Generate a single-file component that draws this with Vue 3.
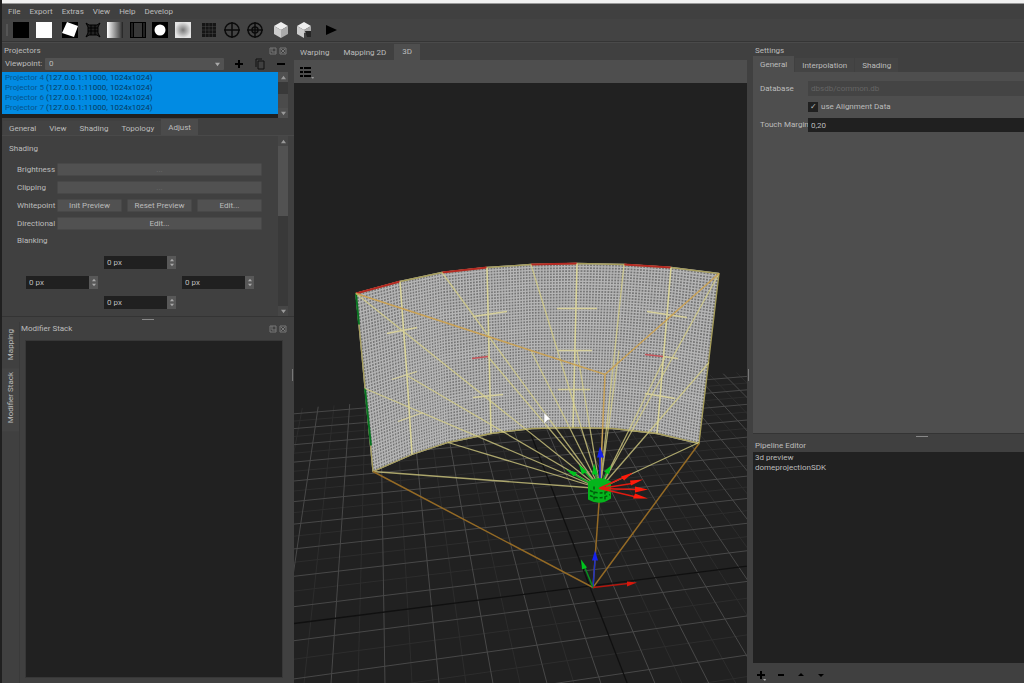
<script setup>
import { ref } from 'vue'

const menus = ['File', 'Export', 'Extras', 'View', 'Help', 'Develop']
const projectors = [4, 5, 6, 7]
const projectorTabs = ['General', 'View', 'Shading', 'Topology', 'Adjust']
const viewTabs = ['Warping', 'Mapping 2D', '3D']
const settingsTabs = ['General', 'Interpolation', 'Shading']
const useAlignment = ref(true)
const margins = ref({ top: '0 px', left: '0 px', right: '0 px', bottom: '0 px' })

// Ground plane: both line families meet on the same horizon.
const horizon = 25
const near = { x: 375, y: horizon }
const side = { x: 5000, y: horizon }
const step = 0.0000475

const majors = []
const minors = []
for (let k = -44; k <= 26; k++) {
  const x = 628 + 27 * k
  const slope = (x - near.x) / (683 - horizon)
  // Clip each depth line at the far edge of the plane.
  const depth = 0.00261
  const leftY = horizon + 1 / depth
  const edge = (horizon - leftY) / (side.x - 294)
  const topY = (leftY + edge * (near.x - slope * horizon - 294)) / (1 - edge * slope)
  const topX = near.x + slope * (topY - horizon)
  const d = `M${topX.toFixed(1)} ${topY.toFixed(1)}L${(near.x + slope * 700).toFixed(1)} 725`
  if (k !== 0) (k % 2 ? majors : minors).push(d)
}
for (let k = -14; k <= 19; k++) {
  const y = horizon + 1 / (0.001673 + step * k)
  const endY = y + ((horizon - y) / (side.x - 294)) * 506
  const d = `M294 ${y.toFixed(1)}L800 ${endY.toFixed(1)}`
  if (k !== 0) (k % 2 ? majors : minors).push(d)
}

// Curved screen surface.
const top = [[356, 293], [400, 281], [442, 272], [487, 267], [531, 264], [577, 263], [624, 264], [671, 267], [719, 273]]
const bottom = [[373, 471], [412, 454], [448, 442], [491, 433], [532, 428], [573, 427], [613, 428], [657, 433], [699, 443]]
const outline = [...top, ...[...bottom].reverse()].map((p) => p.join(',')).join(' ')
const mix = (a, b, t) => [a[0] + (b[0] - a[0]) * t, a[1] + (b[1] - a[1]) * t]
const pt = (p) => `${p[0].toFixed(1)} ${p[1].toFixed(1)}`
let columns = ''
let rows = ''
for (let i = 0; i < 8; i++) {
  for (let j = 0; j < 15; j++) {
    columns += `M${pt(mix(top[i], top[i + 1], j / 15))}L${pt(mix(bottom[i], bottom[i + 1], j / 15))}`
  }
}
for (let r = 0; r <= 56; r++) {
  rows += 'M' + top.map((p, i) => pt(mix(p, bottom[i], r / 56))).join('L')
}

const source = [600, 488]
const targets = [
  [356, 293], [365, 388], [373, 471], [407, 375], [448, 442], [442, 272], [487, 355], [531, 264],
  [531, 350], [577, 350], [624, 264], [619, 350], [719, 273], [665, 357], [709, 362], [699, 442]
]
const rays = targets.map((t) => `M${t[0]} ${t[1]}L${source[0]} ${source[1]}`).join('')
const crosses = 'M387 333L417 327M473 316L507 311M392 379L417 371M473 397L503 394M398 421L423 412M557 308H597M558 350H592M558 389H590M647 311L687 317M663 356L678 358M645 393L675 398'
</script>

<template>
  <div class="app">
    <div class="window-edge"></div>
    <header>
      <nav class="menu"><button v-for="m in menus" :key="m">{{ m }}</button></nav>
      <div class="toolbar">
        <span class="handle"></span>
        <div class="tools pair">
          <button aria-label="Black"><svg viewBox="0 0 16 16"><path d="M0 0h16v16H0z" /></svg></button>
          <button aria-label="White"><svg viewBox="0 0 16 16"><path fill="#fff" d="M0 0h16v16H0z" /></svg></button>
        </div>
        <div class="tools patterns">
          <button aria-label="Warp shape"><svg viewBox="0 0 16 16"><path d="M0 0h16v16H0z" /><path fill="#fff" d="M5 0 16 4 12 15 0 11Z" /></svg></button>
          <button aria-label="Warp grid"><svg viewBox="0 0 16 16"><path fill="#222" d="m1 1 3 2h8l3-2-2 4v6l2 4-3-2H4l-3 2 2-4V5Z" /><path stroke="#000" fill="none" d="m1 1 3 2h8l3-2-2 4v6l2 4-3-2H4l-3 2 2-4V5ZM3 6h10M3 9h10M6 3v10M10 3v10" /></svg></button>
          <button aria-label="Gradient"><svg viewBox="0 0 16 16"><defs><linearGradient id="ramp"><stop stop-color="#fff" /><stop offset=".8" stop-color="#555" /><stop offset="1" stop-color="#222" /></linearGradient></defs><path fill="url(#ramp)" d="M0 0h16v16H0z" /></svg></button>
          <button aria-label="Blend borders"><svg viewBox="0 0 16 16"><path d="M0 0h16v16H0z" /><path fill="#383838" d="M4 1h8v14H4z" /><path stroke="#444" d="M2 1v14M14 1v14" /></svg></button>
          <button aria-label="Circle mask"><svg viewBox="0 0 16 16"><path d="M0 0h16v16H0z" /><circle cx="8" cy="8" r="5.500" fill="#fff" /></svg></button>
          <button aria-label="Vignette"><svg viewBox="0 0 16 16"><defs><radialGradient id="spot"><stop stop-color="#777" /><stop offset="1" stop-color="#e4e4e4" /></radialGradient></defs><path fill="url(#spot)" d="M0 0h16v16H0z" /></svg></button>
        </div>
        <div class="tools overlays">
          <button aria-label="Grid"><svg viewBox="0 0 16 16"><path fill="#151515" d="M1 1h14v14H1z" /><path stroke="#444" stroke-width=".5" d="M1 4.500h14M1 8h14M1 11.500h14M4.500 1v14M8 1v14M11.500 1v14" /></svg></button>
          <button aria-label="Crosshair"><svg viewBox="0 0 16 16" fill="none" stroke="#0b0b0b" stroke-width="1.500"><circle cx="8" cy="8" r="7" /><path d="M0 8h16M8 0v16" /></svg></button>
          <button aria-label="Target"><svg viewBox="0 0 16 16" fill="none" stroke="#0b0b0b" stroke-width="1.500"><circle cx="8" cy="8" r="7" /><circle cx="8" cy="8" r="3" /><path d="M0 8h16M8 0v16" /></svg></button>
        </div>
        <div class="tools pair">
          <button aria-label="Model"><svg viewBox="0 0 16 16"><path fill="#eee" d="m8 0 7 4-7 4-7-4Z" /><path fill="#ccc" d="m1 4 7 4v8l-7-4Z" /><path fill="#aaa" d="m15 4-7 4v8l7-4Z" /></svg></button>
          <button aria-label="Edit model"><svg viewBox="0 0 16 16"><path fill="#eee" d="m8 0 7 4-7 4-7-4Z" /><path fill="#ccc" d="m1 4 7 4v8l-7-4Z" /><path fill="#aaa" d="m15 4-7 4v3h7Z" /><path fill="#252525" d="M9 9h6v6h-4Z" /></svg></button>
        </div>
        <button class="play" aria-label="Run"><svg viewBox="0 0 16 16"><path d="m4 3 11 5-11 5Z" /></svg></button>
      </div>
    </header>

    <main>
      <section class="left">
        <div class="projectors">
          <div class="title">
            <span>Projectors</span>
            <span class="dock">
              <button aria-label="Float"><svg viewBox="0 0 8 8"><path d="M1 1h6v6H1zM3 1v4h4" /></svg></button>
              <button aria-label="Close"><svg viewBox="0 0 8 8"><path d="M1 1h6v6H1zM2 2l4 4M6 2 2 6" /></svg></button>
            </span>
          </div>
          <div class="viewpoint">
            <label for="viewpoint">Viewpoint:</label>
            <div class="combo"><select id="viewpoint"><option>0</option></select><svg viewBox="0 0 6 6"><path d="M0 1h6L3 5z" /></svg></div>
            <button aria-label="Add viewpoint"><svg viewBox="0 0 12 12"><path d="M5 2h2v3h3v2H7v3H5V7H2V5h3z" /></svg></button>
            <button aria-label="Copy viewpoint"><svg viewBox="0 0 12 12" fill="none" stroke="#111"><path d="M4 3h6v8H4zM2 9V1h6" /></svg></button>
            <button aria-label="Remove viewpoint"><svg viewBox="0 0 12 12"><path d="M2 5h8v2H2z" /></svg></button>
          </div>
          <div class="list-wrap">
            <ul><li v-for="p in projectors" :key="p"><b>Projector {{ p }}</b> (127.0.0.1:11000, 1024x1024)</li></ul>
            <div class="scroll">
              <i><svg viewBox="0 0 6 6"><path d="M0 5h6L3 1z" /></svg></i><span class="thumb"></span><i><svg viewBox="0 0 6 6"><path d="M0 1h6L3 5z" /></svg></i>
            </div>
          </div>
        </div>
        <nav class="tabs wide"><button v-for="t in projectorTabs" :key="t" :class="{ on: t === 'Adjust' }">{{ t }}</button></nav>
        <div class="adjust">
          <div class="form">
            <h3>Shading</h3>
            <div class="fields">
              <span>Brightness</span><button class="btn dim">...</button>
              <span>Clipping</span><button class="btn dim">...</button>
              <span>Whitepoint</span>
              <div class="trio"><button class="btn">Init Preview</button><button class="btn">Reset Preview</button><button class="btn">Edit...</button></div>
              <span>Directional</span><button class="btn">Edit...</button>
            </div>
            <h4>Blanking</h4>
            <div class="blanking">
              <div v-for="(v, place) in margins" :key="place" class="spin" :class="'at-' + place">
                <input v-model="margins[place]" :aria-label="place + ' blanking'" />
                <span class="arrows">
                  <button aria-label="Increase"><svg viewBox="0 0 6 6"><path d="M0 5h6L3 1z" /></svg></button>
                  <button aria-label="Decrease"><svg viewBox="0 0 6 6"><path d="M0 1h6L3 5z" /></svg></button>
                </span>
              </div>
            </div>
          </div>
          <div class="scroll tall">
            <i><svg viewBox="0 0 6 6"><path d="M0 5h6L3 1z" /></svg></i><span class="thumb"></span><i><svg viewBox="0 0 6 6"><path d="M0 1h6L3 5z" /></svg></i>
          </div>
        </div>
        <div class="split"></div>
        <div class="modifier">
          <nav class="side-tabs"><button class="on">Mapping</button><button>Modifier Stack</button></nav>
          <div class="stack">
            <div class="title">
              <span>Modifier Stack</span>
              <span class="dock">
                <button aria-label="Float"><svg viewBox="0 0 8 8"><path d="M1 1h6v6H1zM3 1v4h4" /></svg></button>
                <button aria-label="Close"><svg viewBox="0 0 8 8"><path d="M1 1h6v6H1zM2 2l4 4M6 2 2 6" /></svg></button>
              </span>
            </div>
            <div class="stack-list"></div>
          </div>
        </div>
        <span class="grip"></span>
      </section>

      <section class="center">
        <nav class="tabs"><button v-for="t in viewTabs" :key="t" :class="{ on: t === '3D' }">{{ t }}</button></nav>
        <div class="view-tools">
          <button aria-label="Display options"><svg viewBox="0 0 16 16"><path d="M1 2h3v2H1zM5 2h7v2H5zM1 6h3v2H1zM5 6h7v2H5zM1 10h3v2H1zM5 10h7v2H5z" /><path fill="#999" d="M12 12h3l-1 2z" /></svg></button>
        </div>
        <div class="viewport">
          <svg viewBox="294 82 453 601" preserveAspectRatio="xMidYMid slice" role="img" aria-label="3D preview">
            <g fill="none">
              <path :d="minors.join('')" stroke="#2d2d2d" />
              <path :d="majors.join('')" stroke="#484848" />
              <path d="M294 623L800 559M512 385L637 708" stroke="#101010" stroke-width="1.300" />
            </g>
            <polygon :points="outline" fill="#747474" />
            <g fill="none">
              <path :d="columns" stroke="#b5b5b5" stroke-width="1.300" />
              <path :d="rows" stroke="#b5b5b5" stroke-width="1.300" />
              <polygon :points="outline" stroke="#a59c59" stroke-width="1.300" />
              <path d="M356 293 400 281M442 272 487 267M531 264 577 263M624 264 671 267" stroke="#b52922" stroke-width="2" />
              <path d="M356 293 359 324M365 388 371 445" stroke="#087322" stroke-width="2" />
              <path :d="rays" stroke="#d9d284" stroke-width="1.300" opacity=".75" />
              <path d="M400 281 407 375 412 454M487 267 491 433M577 263 573 427M671 267 657 433" stroke="#dbd598" stroke-width="1.500" />
              <path :d="crosses" stroke="#d7d09b" stroke-width="1.300" />
              <path d="M472 358 488 356M645 354 663 356" stroke="#c45359" stroke-width="1.500" />
              <path d="M356 293 531 350 605 374 719 273M605 374 600 488" stroke="#c9a155" stroke-width="1.500" />
              <path d="M373 471 593 587 699 443M600 488 593 587" stroke="#946a25" stroke-width="1.500" />
            </g>
            <g stroke-width="1.500">
              <path stroke="#1ca82b" d="M599 488 571 472M599 488 583 469M599 488 594 467M599 488 608 469" />
              <path fill="#00c51e" d="m566 469 11 3-3 4ZM579 464l8 7-5 3ZM594 463l4 11h-6ZM611 465l-2 9-5-3Z" />
              <path stroke="#1522ee" d="M600 488V455" /><path fill="#1522ee" d="m600 446 4 11h-7Z" />
              <path fill="#05b51c" d="M588 481q12-7 23 0v17q-11 8-23 1Z" />
              <path stroke="#005e0b" fill="none" stroke-dasharray="3 2" d="M590 490q10 5 20 0M590 495q10 5 20-1M594 486v14M605 486v14" />
              <path stroke="#e01b10" d="M599 488 623 477M600 488 632 483M600 488 635 489M600 488 634 496" />
              <path fill="#ff1b0a" d="m633 472-9 8-3-4ZM643 479l-12 6-1-5ZM648 489l-13 3v-6ZM648 498l-15 0 2-5Z" />
              <path stroke="#1d30c6" d="M593 587 595 560" /><path fill="#1522ee" d="m595 550 3 10h-6Z" />
              <path stroke="#078e21" d="M593 587 584 565" /><path fill="#00c51e" d="m581 559 6 8-5 2Z" />
              <path stroke="#b5170e" d="M593 587 628 583" /><path fill="#d8180c" d="m637 582-10 4v-5Z" />
              <path fill="#fff" stroke="#777" stroke-width=".5" d="m544 412 7 7-4 1-3 4Z" />
            </g>
          </svg>
        </div>
      </section>

      <section class="right">
        <div class="title"><span>Settings</span></div>
        <nav class="tabs"><button v-for="t in settingsTabs" :key="t" :class="{ on: t === 'General' }">{{ t }}</button></nav>
        <div class="settings">
          <label for="database">Database</label><input id="database" class="disabled" value="dbsdb/common.db" disabled />
          <span></span><label class="check"><input v-model="useAlignment" type="checkbox" />use Alignment Data</label>
          <label for="margin">Touch Margin</label><input id="margin" value="0,20" />
        </div>
        <div class="split"></div>
        <div class="title pipeline">Pipeline Editor</div>
        <ul class="pipeline-list"><li>3d preview</li><li>domeprojectionSDK</li></ul>
        <footer>
          <button aria-label="Add step"><svg viewBox="0 0 12 12"><path d="M5 2h2v3h3v2H7v3H5V7H2V5h3z" /><path fill="#aaa" d="M8 10h3l-1 2z" /></svg></button>
          <button aria-label="Remove step"><svg viewBox="0 0 12 12"><path d="M3 5h6v2H3z" /></svg></button>
          <button aria-label="Move up"><svg viewBox="0 0 12 12"><path d="m6 4 3 3H3z" /></svg></button>
          <button aria-label="Move down"><svg viewBox="0 0 12 12"><path d="M3 5h6L6 8z" /></svg></button>
        </footer>
        <span class="grip"></span>
      </section>
    </main>
  </div>
</template>

<style>
body { margin: 0; background: #404040; }
</style>

<style scoped>
* { box-sizing: border-box; }
.app { height: 100vh; display: flex; flex-direction: column; background: #404040; color: #bcbcbc; font: 8px/10px Roboto, "Liberation Sans", sans-serif; border-left: 2px solid #202020; overflow: hidden; }
button { border: 0; padding: 0; background: none; color: inherit; font: inherit; white-space: nowrap; }
input, select { font: inherit; color: inherit; border: 0; border-radius: 0; padding: 0; min-width: 0; }
ul { margin: 0; padding: 0; list-style: none; }
svg { display: block; width: 100%; height: 100%; }
.window-edge { height: 4px; background: #f1f1f1; border-bottom: 1px solid #999; }
.menu { height: 15px; display: flex; gap: 9px; padding-left: 6px; }
.toolbar { height: 23px; display: flex; align-items: center; gap: 10px; padding-left: 4px; border-bottom: 1px solid #353535; background: #434343; }
.handle { width: 2px; height: 12px; background: #555; margin-right: -5px; }
.tools { display: flex; justify-content: space-between; }
.tools button, .play { width: 16px; height: 16px; }
.pair { width: 39px; }
.patterns { width: 129px; }
.overlays { width: 62px; }
main { flex: 1; min-height: 0; display: grid; grid-template-columns: 292px 1fr 277px; border-top: 1px solid #4a4a4a; }
section { min-width: 0; min-height: 0; display: flex; flex-direction: column; position: relative; }
.title { height: 14px; display: flex; align-items: center; justify-content: space-between; padding: 1px 7px 0 2px; flex: none; }
.dock { display: flex; gap: 2px; }
.dock button { width: 8px; height: 8px; }
.dock svg { fill: none; stroke: #777; }
.viewpoint { height: 14px; display: grid; grid-template-columns: 37px 1fr 12px 12px 12px; align-items: center; column-gap: 9px; padding: 0 7px 0 3px; }
.viewpoint button { height: 12px; }
.combo { position: relative; height: 12px; margin-left: -6px; }
.combo svg { position: absolute; right: 4px; top: 4px; width: 5px; height: 5px; fill: #aaa; }
select { appearance: none; display: block; width: 100%; height: 12px; padding-left: 4px; background: #525252; border-radius: 1px; }
.list-wrap { height: 46px; display: flex; margin-top: 1px; padding-right: 6px; background: linear-gradient(to left, #404040 6px, #202020 6px); }
.list-wrap ul { flex: 1; height: 42px; background: #018be3; color: #063b61; padding-top: 1px; }
.list-wrap li { padding-left: 3px; height: 10px; white-space: nowrap; }
.list-wrap b { font-weight: 400; color: #07548b; }
.scroll { width: 10px; flex: none; display: flex; flex-direction: column; background: #393939; }
.scroll i { height: 10px; background: #505050; display: grid; place-items: center; }
.scroll svg { width: 5px; height: 5px; fill: #999; }
.scroll .thumb { flex: 1; margin-top: 12px; background: #4b4b4b; }
.tall { margin-right: 6px; }
.tabs { display: flex; align-items: flex-end; height: 16px; flex: none; border-bottom: 1px solid #4e4e4e; }
.tabs button { height: 14px; padding: 1px 10px 0; background: #444; }
.tabs button.on { height: 16px; background: #4e4e4e; }
.wide { margin-top: 2px; padding-left: 1px; border-color: #494949; }
.wide button { padding: 2px 7px 0 6px; background: #434343; }
.wide button.on { background: #4b4b4b; padding: 1px 7px 0; }
.adjust { display: flex; height: 180px; flex: none; }
.form { flex: 1; padding: 8px 16px 0 7px; }
h3, h4 { font: inherit; margin: 0; }
.fields { display: grid; grid-template-columns: 40px 1fr; row-gap: 5px; align-items: center; padding: 9px 0 0 8px; }
.btn { height: 13px; width: 100%; background: #515151; border: 1px solid #484848; border-radius: 1px; line-height: 11px; }
.dim { color: #6c6c6c; }
.trio { display: grid; grid-template-columns: repeat(3, 1fr); gap: 5px; }
h4 { margin: 6px 0 0 8px; }
.blanking { display: grid; grid-template-columns: repeat(3, 72px); grid-template-rows: repeat(3, 13px); gap: 7px 6px; padding: 10px 0 0 17px; }
.spin { display: flex; background: #202020; min-width: 0; }
.spin input { flex: 1; width: 0; padding-left: 3px; background: none; }
.at-top { grid-area: 1 / 2; }
.at-left { grid-area: 2 / 1; }
.at-right { grid-area: 2 / 3; }
.at-bottom { grid-area: 3 / 2; }
.arrows { width: 9px; background: #585858; display: flex; flex-direction: column; justify-content: space-evenly; align-items: center; }
.arrows button, .arrows svg { width: 4px; height: 4px; fill: #aaa; }
.tall .thumb { flex: none; height: 70px; margin: 0 0 auto; background: #525252; }
.tall i { background: #464646; }
.split { height: 6px; flex: none; border-top: 1px solid #343434; position: relative; }
.split::after { content: ""; position: absolute; left: calc(50% - 6px); top: 2px; width: 12px; height: 1px; background: #888; }
.modifier { flex: 1; min-height: 0; display: flex; }
.side-tabs { width: 18px; display: flex; flex-direction: column; padding-top: 3px; border-right: 1px solid #3a3a3a; }
.side-tabs button { writing-mode: vertical-rl; transform: rotate(180deg); width: 17px; padding: 8px 4px 4px 3px; background: #444; }
.side-tabs .on { background: #404040; }
.stack { flex: 1; display: flex; flex-direction: column; }
.stack .title { margin-bottom: 4px; padding: 0 7px 0 1px; }
.stack-list { flex: 1; margin: 0 11px 5px 5px; background: #212121; border: 1px solid #373737; }
.grip { position: absolute; right: 1px; top: 326px; height: 12px; width: 1px; background: #777; }
.right .grip { left: 1px; right: auto; }
.center .tabs { margin-top: 1px; height: 17px; padding-top: 1px; }
.center .tabs button { padding: 0 6px; background: none; margin-right: 2px; }
.center .tabs button.on { padding: 0 8px; background: #4e4e4e; margin: 0; }
.view-tools { height: 22px; flex: none; background: #4e4e4e; padding: 4px 5px; }
.view-tools button { width: 16px; height: 16px; display: block; }
.viewport { flex: 1; min-height: 0; background: #212121; }
section.right { padding-left: 6px; }
.right > .tabs { height: 16px; }
.right > .tabs button { padding: 1px 7px 0; margin-right: 1px; }
.right > .tabs button.on { padding: 1px 7px 0; }
.settings { flex: 1; background: #4e4e4e; display: grid; grid-template-columns: 46px 1fr; grid-template-rows: 15px 12px 14px; row-gap: 5px; column-gap: 2px; align-items: center; padding: 8px 0 0 7px; }
.settings > input { height: 100%; padding-left: 3px; background: #202020; }
.settings .disabled { background: #444; color: #656565; }
.settings > label { white-space: nowrap; }
.check { display: flex; align-items: center; gap: 3px; }
.check input { appearance: none; margin: 0; width: 10px; height: 10px; background: #202020; display: grid; place-items: center; }
.check input:checked::before { content: "✓"; }
.right .split::after { left: 60%; }
.pipeline { height: 13px; }
.pipeline-list { flex: none; height: calc((100vh - 50px) / 3); background: #212121; padding: 1px 0 0 2px; }
footer { height: 20px; flex: none; display: flex; gap: 8px; align-items: center; padding: 4px 2px 0; }
footer button { width: 12px; height: 12px; }
</style>
